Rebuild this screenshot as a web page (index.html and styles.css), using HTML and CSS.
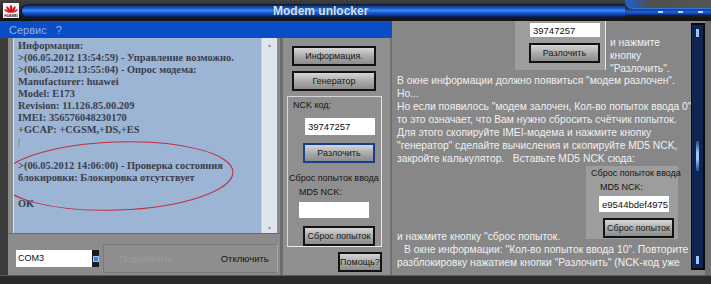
FILE: index.html
```html
<!DOCTYPE html>
<html lang="ru">
<head>
    <meta charset="UTF-8">
    <title>Modem unlocker</title>
    <link rel="stylesheet" href="styles.css">
</head>
<body>
<div class="window">
    <div class="titlebar">
        <svg class="logo" viewBox="0 0 16 15">
            <rect width="16" height="15" fill="#f4f4f4"/>
            <g fill="#d8141c">
                <ellipse cx="8" cy="6" rx="1.3" ry="4" />
                <ellipse cx="5.5" cy="6.5" rx="1.2" ry="3.6" transform="rotate(-30 5.5 6.5)"/>
                <ellipse cx="10.5" cy="6.5" rx="1.2" ry="3.6" transform="rotate(30 10.5 6.5)"/>
                <ellipse cx="3.8" cy="8" rx="1" ry="3" transform="rotate(-60 3.8 8)"/>
                <ellipse cx="12.2" cy="8" rx="1" ry="3" transform="rotate(60 12.2 8)"/>
            </g>
            <text x="8" y="14.2" font-size="3.4" font-family="Liberation Sans, sans-serif" font-weight="bold" text-anchor="middle" fill="#222">HUAWEI</text>
        </svg>
        <div class="title-pill"><span>Modem unlocker</span></div>
        <div class="title-cap">
            <div class="cap-top"></div>
            <div class="cap-band"><i></i><i></i><i></i></div>
        </div>
    </div>

    <div class="body">
        <div class="main">
            <div class="menubar">
                <span>Сервис</span>
                <span>?</span>
            </div>
            <div class="panels">
                <div class="log-panel">
                    <div class="log">
                        <div class="log-text">
                            <div>Информация:</div>
                            <div>&gt;(06.05.2012 13:54:59) - Управление возможно.</div>
                            <div>&gt;(06.05.2012 13:55:04) - Опрос модема:</div>
                            <div>Manufacturer: huawei</div>
                            <div>Model: E173</div>
                            <div>Revision: 11.126.85.00.209</div>
                            <div>IMEI: 356576048230170</div>
                            <div>+GCAP: +CGSM,+DS,+ES</div>
                            <div class="caret">|</div>
                            <div>&nbsp;</div>
                            <div>&gt;(06.05.2012 14:06:00) - Проверка состояния</div>
                            <div>блокировки: Блокировка отсутствует</div>
                            <div>&nbsp;</div>
                            <div class="ok">OK</div>
                        </div>
                        <div class="vscroll">
                            <span>&#9650;</span>
                            <span>&#9660;</span>
                        </div>
                        <svg class="mark" viewBox="0 0 240 74">
                            <ellipse cx="117" cy="37" rx="116" ry="34" transform="rotate(-2 117 37)" fill="none" stroke="#c42c44" stroke-width="1"/>
                        </svg>
                    </div>
                    <div class="port-row">
                        <div class="port">
                            <div class="port-input">COM3</div>
                            <div class="spin"><b></b></div>
                        </div>
                        <div class="connect">
                            <span class="off">Подключить</span>
                            <span>Отключить</span>
                        </div>
                    </div>
                </div>

                <div class="side">
                    <div class="btn wide">Информация.</div>
                    <div class="btn wide">Генератор</div>
                    <div class="group">
                        <div class="lbl nck">NCK код:</div>
                        <div class="field code">39747257</div>
                        <div class="btn small focus">Разлочить</div>
                        <div class="lbl reset">Сброс попыток ввода</div>
                        <div class="lbl md5">MD5 NCK:</div>
                        <div class="field md5-field"></div>
                        <div class="btn small">Сброс попыток</div>
                    </div>
                    <div class="btn help-btn">Помощь?</div>
                </div>
            </div>
        </div>

        <div class="help">
            <div class="help-text">
                <div class="row-top">
                    <div class="shot shot-unlock">
                        <div class="field shot-code">39747257</div>
                        <div class="btn shot-btn">Разлочить</div>
                    </div>
                    <div class="side-note">
                        <div>и нажмите</div>
                        <div>кнопку</div>
                        <div>"Разлочить".</div>
                    </div>
                </div>
                <div>В окне информации должно появиться "модем разлочен".</div>
                <div>Но...</div>
                <div>Но если появилось "модем залочен, Кол-во попыток ввода 0"</div>
                <div>то это означает, что Вам нужно сбросить счётчик попыток.</div>
                <div>Для этого скопируйте IMEI-модема и нажмите кнопку</div>
                <div>"генератор" сделайте вычисления и скопируйте MD5 NCK,</div>
                <div>закройте калькулятор. &nbsp;&nbsp;Вставьте MD5 NCK сюда:</div>
                <div class="row-reset">
                    <div class="reset-text">и нажмите кнопку "сброс попыток.</div>
                    <div class="shot shot-reset">
                        <div class="lbl">Сброс попыток ввода</div>
                        <div class="lbl shot-md5">MD5 NCK:</div>
                        <div class="field shot-hash">e9544bdef4975</div>
                        <div class="btn shot-btn2">Сброс попыток</div>
                    </div>
                </div>
                <div class="indent">В окне информации: "Кол-во попыток ввода 10". Повторите</div>
                <div>разблокировку нажатием кнопки "Разлочить" (NCK-код уже</div>
            </div>
            <div class="hscroll">
                <i class="t1"></i>
                <i class="t2"></i>
                <i class="t3"></i>
            </div>
        </div>
    </div>
    <div class="bottom"></div>
</div>
</body>
</html>
```

FILE: styles.css
```css
* { box-sizing: border-box; }
body { margin: 0; background: #2b2b2b; font-family: "Liberation Sans", Arial, sans-serif; }
.window { width: 711px; height: 284px; display: flex; flex-direction: column; background: #2d2d2d; overflow: hidden; }

/* title bar */
.titlebar { height: 21px; display: flex; align-items: center; padding-left: 3px; background: linear-gradient(#404040, #222 60%, #111); }
.logo { width: 16px; height: 15px; flex: none; }
.title-pill { flex: 1; height: 14px; margin-left: 2px; border-radius: 7px 0 0 7px; padding-left: 251px; display: flex; align-items: center;
    background: linear-gradient(#0a2458 0%, #1555c8 25%, #3f8cf0 48%, #1a5fd6 62%, #0b3a9c 85%, #061a44 100%);
    border: 1px solid #0a1a3a; border-right: none; }
.title-pill span { color: #d6e4fa; font-weight: bold; font-size: 12px; text-shadow: 0 0 1px #0a2a6a; }
.title-cap { width: 86px; height: 21px; display: flex; flex-direction: column; }
.cap-top { height: 9px; background: linear-gradient(90deg, #1a5fd6, #4f4f4f 30%, #555); border-radius: 0 0 0 8px; border-bottom: 1px solid #3a78d8; }
.cap-band { height: 6px; background: linear-gradient(#0e3c9c, #1d62d8, #0b2f7c); display: flex; justify-content: flex-end; align-items: center; gap: 15px; padding-right: 8px; }
.cap-band i { width: 5px; height: 2px; background: #b8d4ff; }

.body { height: 254px; display: flex; }
.main { width: 392px; flex: none; display: flex; flex-direction: column; }
.menubar { height: 17px; background: #0b4dc4; display: flex; align-items: center; gap: 9px; padding-left: 9px; font-size: 11px; color: #8fb0ee; }
.panels { flex: 1; display: flex; }

/* log */
.log-panel { width: 280px; display: flex; flex-direction: column; background: #8b8b8b; border-left: 8px solid #3c3c3c; }
.log { position: relative; height: 195px; margin-left: 5px; width: 264px; display: flex; background: #9cb5d4; border-left: 1px solid #d8e2ee; overflow: hidden; }
.log-text { flex: 1; min-width: 0; padding: 2px 0 0 4px; font-family: "Liberation Serif", "Times New Roman", serif; font-weight: bold; font-size: 10.4px; line-height: 12px; color: #3b3d4c; white-space: nowrap; }
.caret { font-weight: normal; color: #666; }
.ok { margin-top: 2px; }
.vscroll { width: 16px; display: flex; flex-direction: column; justify-content: space-between; align-items: center; padding: 4px 0 2px; background: #dfe5ec; border-left: 1px solid #c5d0dc; font-size: 5px; color: #8a8a8a; }
.mark { position: absolute; left: -14px; top: 101px; width: 240px; height: 74px; }

.port-row { flex: 1; display: flex; align-items: flex-start; padding: 10px 0 0 8px; border-top: 1px solid #6d6d6d; }
.port { display: flex; margin-top: 6px; }
.port-input { width: 76px; height: 17px; background: #fff; font-size: 9px; line-height: 17px; padding-left: 2px; color: #111; }
.spin { width: 7px; height: 17px; background: #1b1b1b; display: flex; align-items: center; justify-content: center; }
.spin b { width: 6px; height: 6px; background: #3d7fe6; border: 1px solid #9cc4ff; }
.connect { margin-left: 4px; width: 175px; height: 29px; background: #8e8e8e; border: 1px solid #7a7a7a; border-right-color: #a8a8a8; display: flex; align-items: center; font-size: 9.5px; color: #151515; }
.connect span { padding-left: 15px; }
.connect .off { color: #9c9c9c; padding-right: 33px; }

/* buttons column */
.side { width: 112px; display: flex; flex-direction: column; align-items: flex-start; background: #8f8f8f; border-left: 3px solid #6c6c6c; border-right: 2px solid #707070; font-size: 9px; color: #151515; }
.btn { display: flex; align-items: center; justify-content: center; height: 20px; border: 2px solid #121212; background: linear-gradient(#d6d6d6, #a8a8a8 55%, #8c8c8c); color: #181818; font-size: 9px; white-space: nowrap; }
.wide { width: 84px; margin-left: 9px; margin-top: 8px; }
.wide + .wide { margin-top: 5px; }
.group { width: 95px; height: 151px; margin: 5px 0 0 4px; border-left: 1px solid #d8d8d8; border-top: 1px solid #d8d8d8; border-right: 1px solid #e6e6e6; border-bottom: 1px solid #eaeaea; display: flex; flex-direction: column; align-items: flex-start; }
.lbl { font-size: 9px; line-height: 13px; white-space: nowrap; }
.nck { margin: 2px 0 0 5px; }
.field { background: #fff; color: #111; font-size: 9.5px; padding-left: 3px; display: flex; align-items: center; }
.code { width: 70px; height: 17px; margin: 6px 0 0 17px; }
.small { width: 72px; margin-left: 15px; }
.group .small { margin-top: 8px; }
.focus { border-color: #1c3e8e; margin-bottom: 4px; }
.reset { margin: 5px 0 0 1px; }
.md5 { margin: 1px 0 0 11px; }
.md5-field { width: 70px; height: 16px; margin: 3px 0 0 11px; }
.help-btn { width: 44px; margin: 5px 0 0 55px; }

/* help text */
.help { flex: 1; min-width: 0; display: flex; background: #878787; border-right: 6px solid #6e6e6e; }
.help-text { flex: 1; min-width: 0; padding-left: 5px; font-size: 10.3px; line-height: 13px; color: #f1f1f1; white-space: nowrap; overflow: hidden; }
.row-top { display: flex; height: 53px; }
.shot { background: #9d9d9d; color: #151515; flex: none; }
.shot-unlock { width: 91px; height: 49px; margin-left: 118px; border-right: 1px solid #e8e8e8; }
.shot-code { width: 70px; height: 14px; margin: 2px 0 0 15px; }
.shot-btn { width: 71px; margin: 6px 0 0 14px; }
.side-note { padding: 15px 0 0 4px; }
.row-reset { display: flex; align-items: flex-end; height: 78px; }
.reset-text { flex: 1; }
.shot-reset { width: 92px; height: 73px; margin: 0 13px 4px 0; padding-top: 1px; }
.shot-reset .lbl { padding-left: 5px; }
.shot-reset .shot-md5 { padding-left: 14px; margin-top: 1px; }
.shot-hash { width: 70px; height: 16px; margin: 2px 0 0 13px; }
.shot-btn2 { width: 71px; margin: 6px 0 0 17px; }
.indent { padding-left: 7px; }

.hscroll { width: 14px; flex: none; margin: 2px 0 5px; background: #0f2450; border: 2px solid #0a0a0a; border-left-width: 1px; position: relative; }
.hscroll i { position: absolute; left: 4px; width: 3px; background: #9cc6f4; }
.hscroll .t1 { top: 4px; height: 8px; }
.hscroll .t2 { top: 116px; height: 30px; background: linear-gradient(#1d4a8c, #9cc6f4 40%, #9cc6f4 60%, #1d4a8c); }
.hscroll .t3 { bottom: 4px; height: 8px; }

.bottom { height: 9px; background: #2a2a2a; border-top: 1px solid #5c5c5c; }
```
